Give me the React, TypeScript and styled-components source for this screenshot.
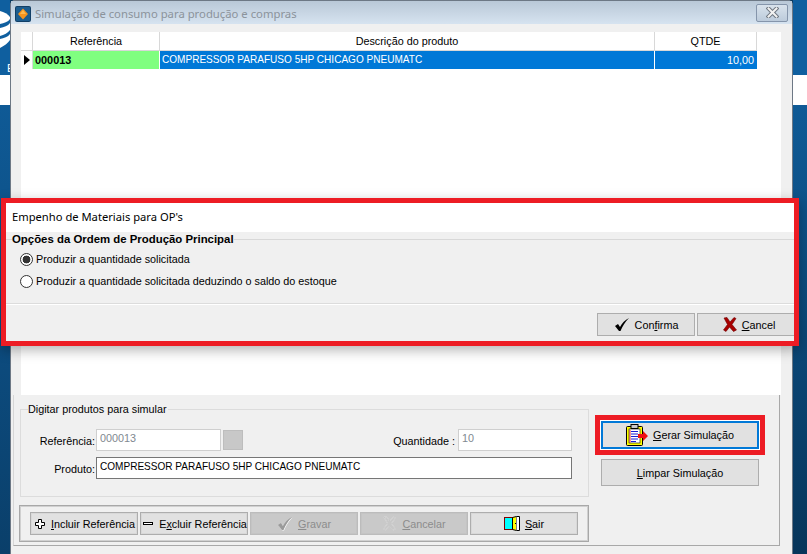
import React from "react";
import styled, { createGlobalStyle } from "styled-components";

const GlobalStyle = createGlobalStyle`
    html, body {
        margin: 0;
        padding: 0;
        background: #0a3a60;
    }
    * {
        box-sizing: border-box;
    }
`

const DatabaseIcon = () => (
    <svg width="10" height="40" viewBox="0 0 10 40">
        <path d="M0 1 C4 2 8 4 10 7 L10 9 C8 12 4 13 0 14 Z" fill="#fff" />
        <path d="M0 18 C4 17 8 16 10 13 L10 20 C8 23 4 25 0 26 Z" fill="#fff" />
        <path d="M0 29 C4 28 8 27 10 24 L10 30 C8 33 4 36 0 38 Z" fill="#fff" />
    </svg>
)

const AppIcon = () => (
    <svg width="16" height="16" viewBox="0 0 16 16">
        <rect x="0" y="0" width="16" height="16" rx="2" fill="#123f66" />
        <rect x="1" y="1" width="14" height="14" rx="1" fill="#1c5c8e" />
        <path d="M8 2.5 L13 8 L8 13.5 L3 8 Z" fill="#f7941d" />
        <path d="M8 4 L11 8 L8 8 L5 8 Z" fill="#ffb84d" />
    </svg>
)

const CloseIcon = () => (
    <svg width="13" height="11" viewBox="0 0 13 11">
        <path d="M2.5 1.5 L10.5 9.5 M10.5 1.5 L2.5 9.5" stroke="#6e7680" strokeWidth="4" strokeLinecap="square" />
        <path d="M2.5 1.5 L10.5 9.5 M10.5 1.5 L2.5 9.5" stroke="#f2f2f2" strokeWidth="2" strokeLinecap="square" />
    </svg>
)

const CheckIcon = ({ muted }: { muted?: boolean }) => (
    <svg width="16" height="15" viewBox="0 0 16 15">
        {muted && <path d="M1 9 L4 7 L6 10 C8 6 11 3 15 1 C11 5 8.5 9 6.5 14 L5 14 Z" fill="#fff" transform="translate(0.5 0.5)" />}
        <path d="M1 9 L4 7 L6 10 C8 6 11 3 15 1 C11 5 8.5 9 6.5 14 L5 14 Z" fill={muted ? "#9a9a9a" : "#000"} />
    </svg>
)

const CrossIcon = () => (
    <svg width="14" height="15" viewBox="0 0 14 15">
        <path d="M1 1 L4 0.5 L7 5 L11 0.5 L13 1.5 L9 7.5 L13.5 13 L10.5 14.5 L6.5 10 L3 14.5 L0.5 13 L4.5 7.5 Z" fill="#a80000" stroke="#6b0000" strokeWidth="0.6" />
    </svg>
)

const MutedCrossIcon = () => (
    <svg width="15" height="15" viewBox="0 0 15 15">
        <path d="M2 1 L5 1 L7.5 5 L11.5 1 L13.5 2 L9.5 7.5 L13.5 13 L11 14 L7 10 L3.5 14 L1.5 13 L5.5 7.5 Z" fill="#c8c8c8" stroke="#fff" strokeWidth="1" />
        <path d="M2 1 L5 1 L7.5 5 L11.5 1 L13.5 2 L9.5 7.5 L13.5 13 L11 14 L7 10 L3.5 14 L1.5 13 L5.5 7.5 Z" fill="none" stroke="#9a9a9a" strokeWidth="0.5" />
    </svg>
)

const PlusIcon = () => (
    <svg width="13" height="13" viewBox="0 0 13 13">
        <path d="M5.5 2.5 H8.5 V5.5 H11.5 V8.5 H8.5 V11.5 H5.5 V8.5 H2.5 V5.5 H5.5 Z" fill="#fff" stroke="#000" strokeWidth="1" />
    </svg>
)

const MinusIcon = () => (
    <svg width="13" height="13" viewBox="0 0 13 13">
        <rect x="2.5" y="5.5" width="9" height="2" fill="#fff" stroke="#000" strokeWidth="1" />
    </svg>
)

const DoorIcon = () => (
    <svg width="16" height="15" viewBox="0 0 16 15">
        <rect x="0.5" y="1.5" width="8" height="12" fill="#00ffff" stroke="#800000" />
        <path d="M8.5 1.5 L12.5 0.5 V14.5 L8.5 13.5 Z" fill="#ffff00" stroke="#000" />
        <path d="M12.5 0.5 H15.5 V14.5 H12.5" fill="#fff" stroke="#000" />
        <rect x="11" y="7" width="1" height="1" fill="#000" />
    </svg>
)

const ClipboardIcon = () => (
    <svg width="23" height="23" viewBox="0 0 23 23">
        <rect x="0.5" y="2.5" width="16" height="19" rx="1" fill="#ffff00" stroke="#000" />
        <rect x="3" y="5" width="11" height="14" fill="#fff" stroke="#000" strokeWidth="0.6" />
        <rect x="5" y="0.5" width="7" height="4" fill="#c8c8c8" stroke="#000" />
        <path d="M5 7.5 H12 M5 10 H12 M5 12.5 H12 M5 15 H12 M5 17.5 H10" stroke="#1a1ad6" strokeWidth="1" />
        <path d="M4 6 V18.5" stroke="#e00000" strokeWidth="0.8" />
        <path d="M12 10 H17 V7 L22 12 L17 17 V14 H12 Z" fill="#f01010" />
    </svg>
)

type BarButtonProps = {
    icon: React.ReactNode
    mnemonic: string
    before?: string
    after: string
    disabled?: boolean
}

const BarButton = ({ icon, before, mnemonic, after, disabled }: BarButtonProps) => (
    <ToolButton $disabled={disabled}>
        {icon}
        <span>{before}<u>{mnemonic}</u>{after}</span>
    </ToolButton>
)

export default function App() {
    return (
        <>
            <GlobalStyle />
            <Page>
                <LeftStrip>
                    <DatabaseIcon />
                    <StripLetter>E</StripLetter>
                </LeftStrip>
                <Window>
                    <TitleBar>
                        <TitleGroup>
                            <AppIcon />
                            <TitleText>Simulação de consumo para produção e compras</TitleText>
                        </TitleGroup>
                        <CloseButton><CloseIcon /></CloseButton>
                    </TitleBar>
                    <GridArea>
                        <Grid>
                            <HeaderCell />
                            <HeaderCell>Referência</HeaderCell>
                            <HeaderCell>Descrição do produto</HeaderCell>
                            <HeaderCell>QTDE</HeaderCell>
                            <IndicatorCell><RowArrow /></IndicatorCell>
                            <RefCell>000013</RefCell>
                            <BlueCell>COMPRESSOR PARAFUSO 5HP CHICAGO PNEUMATC</BlueCell>
                            <BlueCell $right>10,00</BlueCell>
                        </Grid>
                    </GridArea>
                    <BottomPanel>
                        <BottomLeft>
                            <InputGroup>
                                <InputLegend>Digitar produtos para simular</InputLegend>
                                <FieldRow>
                                    <FieldLabel>Referência:</FieldLabel>
                                    <ReadOnlyBox $width={125}>000013</ReadOnlyBox>
                                    <LookupButton />
                                    <QuantityLabel>Quantidade :</QuantityLabel>
                                    <ReadOnlyBox $width={114}>10</ReadOnlyBox>
                                </FieldRow>
                                <FieldRow $product>
                                    <FieldLabel>Produto:</FieldLabel>
                                    <ProductBox>COMPRESSOR PARAFUSO 5HP CHICAGO PNEUMATC</ProductBox>
                                </FieldRow>
                            </InputGroup>
                            <Toolbar>
                                <BarButton icon={<PlusIcon />} mnemonic="I" after="ncluir Referência" />
                                <BarButton icon={<MinusIcon />} before="E" mnemonic="x" after="cluir Referência" />
                                <BarButton icon={<CheckIcon muted />} mnemonic="G" after="ravar" disabled />
                                <BarButton icon={<MutedCrossIcon />} mnemonic="C" after="ancelar" disabled />
                                <BarButton icon={<DoorIcon />} mnemonic="S" after="air" />
                            </Toolbar>
                        </BottomLeft>
                        <BottomRight>
                            <GenerateButton>
                                <ClipboardIcon />
                                <span><u>G</u>erar Simulação</span>
                            </GenerateButton>
                            <ClearButton><span><u>L</u>impar Simulação</span></ClearButton>
                        </BottomRight>
                    </BottomPanel>
                </Window>
                <RightStrip />
                <Dialog>
                    <DialogTitle>Empenho de Materiais para OP's</DialogTitle>
                    <OptionsGroup>
                        <OptionsLegend>Opções da Ordem de Produção Principal</OptionsLegend>
                        <OptionRow>
                            <Radio $checked />
                            Produzir a quantidade solicitada
                        </OptionRow>
                        <OptionRow>
                            <Radio />
                            Produzir a quantidade solicitada deduzindo o saldo do estoque
                        </OptionRow>
                    </OptionsGroup>
                    <DialogFooter>
                        <DialogButton $width={98}>
                            <CheckIcon />
                            <span>Con<u>f</u>irma</span>
                        </DialogButton>
                        <DialogButton $width={97}>
                            <CrossIcon />
                            <span><u>C</u>ancel</span>
                        </DialogButton>
                    </DialogFooter>
                </Dialog>
            </Page>
        </>
    )
}

const uiFont = `"Liberation Sans", Arial, sans-serif`
const titleFont = `"Noto Sans", "Open Sans", sans-serif`

const Page = styled.div`
    position: relative;
    display: flex;
    width: 807px;
    height: 554px;
    overflow: hidden;
    font-family: ${uiFont};
    font-size: 10.8px;
    color: #000;
`

const LeftStrip = styled.div`
    width: 10px;
    flex: none;
    padding-top: 10px;
    overflow: hidden;
    background: linear-gradient(to bottom, #0f5f9f 0, #0f5f9f 75px, #fff 75px, #fff 105px, #0f5a96 105px, #0a3f6a 100%);
    svg {
        display: block;
    }
`

const StripLetter = styled.div`
    margin: 11px 0 0 7px;
    color: #fff;
    font-size: 11px;
    line-height: 14px;
`

const RightStrip = styled.div`
    width: 14px;
    flex: none;
    background: linear-gradient(to bottom, #0f5f9f 0, #0f5f9f 75px, #fff 75px, #fff 105px, #0f5a96 105px, #07355a 100%);
`

const Window = styled.div`
    width: 783px;
    flex: none;
    height: 554px;
    display: flex;
    flex-direction: column;
    background: #f0f0f0;
    border: 1px solid #6d7885;
    border-bottom: none;
    border-radius: 5px 5px 0 0;
`

const TitleBar = styled.div`
    height: 23px;
    flex: none;
    display: flex;
    align-items: center;
    justify-content: space-between;
    padding: 2px 4px 0 4px;
    background: linear-gradient(to bottom, #b9c8d7, #d6e3f0);
`

const TitleGroup = styled.div`
    display: flex;
    align-items: center;
    gap: 4px;
`

const TitleText = styled.span`
    font-family: ${titleFont};
    font-size: 11.3px;
    color: #8b939b;
`

const CloseButton = styled.div`
    width: 32px;
    height: 18px;
    margin-top: -2px;
    display: flex;
    align-items: center;
    justify-content: center;
    border: 1px solid #8595ab;
    border-radius: 2px;
    background: linear-gradient(to bottom, #d8e2ec, #bccbdb);
`

const GridArea = styled.div`
    flex: none;
    height: 371px;
    padding: 8px 11px 0 10px;
`

const Grid = styled.div`
    display: grid;
    grid-template-columns: 12px 127px 495px 102px;
    grid-template-rows: 19px 18px;
    align-content: start;
    height: 100%;
    background: #fff;
    line-height: 16px;
`

const HeaderCell = styled.div`
    display: flex;
    align-items: center;
    justify-content: center;
    border-right: 1px solid #d8d8d8;
    border-bottom: 1px solid #d8d8d8;
    color: #000;
`

const IndicatorCell = styled.div`
    display: flex;
    align-items: center;
    justify-content: center;
    border-right: 1px solid #d8d8d8;
`

const RowArrow = styled.div`
    width: 0;
    height: 0;
    border-top: 5px solid transparent;
    border-bottom: 5px solid transparent;
    border-left: 6px solid #000;
`

const RefCell = styled.div`
    display: flex;
    align-items: center;
    padding-left: 2px;
    background: #80ff80;
    border-right: 1px solid #fff;
    font-weight: bold;
    font-size: 10.9px;
`

const BlueCell = styled.div<{ $right?: boolean }>`
    display: flex;
    align-items: center;
    justify-content: ${p => (p.$right ? "flex-end" : "flex-start")};
    padding: 0 3px 0 2px;
    background: #0078d7;
    border-right: 1px solid #fff;
    color: #fff;
    font-size: ${p => (p.$right ? "10.8px" : "10.05px")};
    &:last-child {
        border-right: none;
    }
`

const BottomPanel = styled.div`
    flex: 1;
    display: flex;
    margin: 0 12px 8px 2px;
    padding: 7px 0 0 6px;
    border-left: 1px solid #d6d6d6;
    border-right: 1px solid #a8a8a8;
    border-bottom: 1px solid #a8a8a8;
`

const BottomLeft = styled.div`
    width: 569px;
    flex: none;
    display: flex;
    flex-direction: column;
`

const InputGroup = styled.fieldset`
    height: 95px;
    margin: 0;
    padding: 13px 16px 0 0;
    border: 1px solid #dcdcdc;
`

const InputLegend = styled.legend`
    margin-left: 7px;
    padding: 0 1px 0 0;
    line-height: 14px;
`

const FieldRow = styled.div<{ $product?: boolean }>`
    display: flex;
    align-items: center;
    height: 22px;
    margin-top: ${p => (p.$product ? "6px" : "0")};
`

const FieldLabel = styled.label`
    width: 75px;
    flex: none;
    padding-right: 1px;
    padding-top: 2px;
    text-align: right;
`

const QuantityLabel = styled.label`
    margin-left: auto;
    margin-right: 3px;
    padding-top: 2px;
    white-space: nowrap;
`

const ReadOnlyBox = styled.div<{ $width: number }>`
    width: ${p => p.$width}px;
    height: 22px;
    padding: 1px 0 0 3px;
    flex: none;
    background: #fff;
    border: 1px solid #cfcfcf;
    color: #808890;
    line-height: 14px;
`

const LookupButton = styled.div`
    width: 20px;
    height: 20px;
    margin-left: 2px;
    flex: none;
    background: #c8c8c8;
    border: 1px solid #bdbdbd;
`

const ProductBox = styled.div`
    width: 476px;
    height: 22px;
    padding: 2px 0 0 3px;
    background: #fff;
    border: 1px solid #767676;
    font-size: 10.05px;
    line-height: 14px;
    white-space: nowrap;
`

const Toolbar = styled.div`
    width: 570px;
    height: 37px;
    margin-top: 8px;
    margin-left: -1px;
    display: flex;
    align-items: center;
    gap: 2px;
    padding-left: 10px;
    border: 1px solid #a8a8a8;
    box-shadow: inset 0 0 0 1px #d0d0d0;
`

const buttonText = `
    display: flex;
    align-items: center;
    justify-content: center;
    flex: none;
    border: 1px solid #adadad;
    background: #e1e1e1;
    font-family: ${uiFont};
    font-size: 10.8px;
    svg {
        flex: none;
    }
`

const ToolButton = styled.div<{ $disabled?: boolean }>`
    ${buttonText}
    width: 108px;
    height: 23px;
    gap: 5px;
    white-space: nowrap;
    background: ${p => (p.$disabled ? "#c9c9c9" : "#e1e1e1")};
    border-color: ${p => (p.$disabled ? "#bcbcbc" : "#adadad")};
    color: ${p => (p.$disabled ? "#8c8c8c" : "#000")};
    box-shadow: inset 0 0 0 1px ${p => (p.$disabled ? "#c4c4c4" : "#d8d8d8")};
`

const BottomRight = styled.div`
    display: flex;
    flex-direction: column;
    align-items: flex-start;
    padding: 19px 0 0 12px;
    gap: 10px;
`

const GenerateButton = styled.div`
    ${buttonText}
    width: 158px;
    height: 28px;
    gap: 4px;
    border: 2px solid #0078d7;
    box-shadow: 0 0 0 1px #fff, 0 0 0 6px #ed1c24;
`

const ClearButton = styled.div`
    ${buttonText}
    width: 158px;
    height: 27px;
`

const Dialog = styled.div`
    position: absolute;
    left: 1px;
    top: 198px;
    width: 798px;
    height: 148px;
    background: #f0f0f0;
    border: 5px solid #ed1c24;
    box-shadow: 0 4px 12px rgba(0, 0, 0, 0.3);
    display: flex;
    flex-direction: column;
`

const DialogTitle = styled.div`
    height: 29px;
    flex: none;
    display: flex;
    align-items: center;
    padding: 0 0 2px 6px;
    background: #fff;
    font-family: ${titleFont};
    font-size: 11.2px;
    color: #000;
`

const OptionsGroup = styled.fieldset`
    height: 71px;
    flex: none;
    margin: 0;
    padding: 2px 0 0 14px;
    border: none;
    border-top: 1px solid #d8d8d8;
`

const OptionsLegend = styled.legend`
    margin-left: -8px;
    padding: 0;
    line-height: 14px;
    font-weight: bold;
    font-size: 11.4px;
`

const OptionRow = styled.div`
    height: 22px;
    display: flex;
    align-items: center;
    gap: 3px;
`

const Radio = styled.span<{ $checked?: boolean }>`
    width: 13px;
    height: 13px;
    flex: none;
    border-radius: 50%;
    border: 1px solid #333;
    background: ${p => (p.$checked ? "radial-gradient(circle, #333 0, #333 3.6px, #fff 4.2px)" : "#fff")};
`

const DialogFooter = styled.div`
    flex: 1;
    display: flex;
    justify-content: flex-end;
    align-items: flex-start;
    gap: 2px;
    padding-top: 9px;
    border-top: 1px solid #dcdcdc;
    box-shadow: inset 0 1px 0 #fff;
`

const DialogButton = styled.div<{ $width: number }>`
    ${buttonText}
    width: ${p => p.$width}px;
    height: 23px;
    gap: 5px;
    &:last-child {
        border-right: none;
        padding-left: 6px;
    }
`
